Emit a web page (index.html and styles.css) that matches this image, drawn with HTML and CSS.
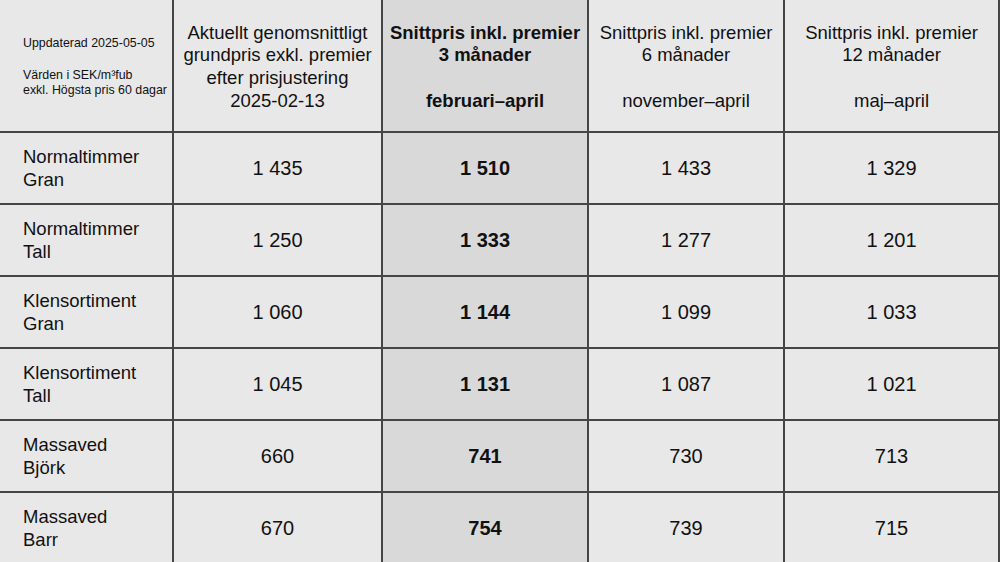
FILE: index.html
```html
<!DOCTYPE html>
<html lang="sv">
<head>
<meta charset="utf-8">
<title>Snittpriser</title>
<link rel="stylesheet" href="styles.css">
</head>
<body>
<div class="grid">
  <div class="cell head note">
    <div>Uppdaterad 2025-05-05</div>
    <div class="gap"></div>
    <div>Värden i SEK/m³fub</div>
    <div>exkl. Högsta pris 60 dagar</div>
  </div>
  <div class="cell head">Aktuellt genomsnittligt<br>grundpris exkl. premier<br>efter prisjustering<br>2025-02-13</div>
  <div class="cell head hl bold">Snittpris inkl. premier<br>3 månader<br><br>februari–april</div>
  <div class="cell head">Snittpris inkl. premier<br>6 månader<br><br>november–april</div>
  <div class="cell head">Snittpris inkl. premier<br>12 månader<br><br>maj–april</div>

  <div class="cell label">Normaltimmer<br>Gran</div>
  <div class="cell num">1 435</div>
  <div class="cell num hl bold">1 510</div>
  <div class="cell num">1 433</div>
  <div class="cell num">1 329</div>

  <div class="cell label">Normaltimmer<br>Tall</div>
  <div class="cell num">1 250</div>
  <div class="cell num hl bold">1 333</div>
  <div class="cell num">1 277</div>
  <div class="cell num">1 201</div>

  <div class="cell label">Klensortiment<br>Gran</div>
  <div class="cell num">1 060</div>
  <div class="cell num hl bold">1 144</div>
  <div class="cell num">1 099</div>
  <div class="cell num">1 033</div>

  <div class="cell label">Klensortiment<br>Tall</div>
  <div class="cell num">1 045</div>
  <div class="cell num hl bold">1 131</div>
  <div class="cell num">1 087</div>
  <div class="cell num">1 021</div>

  <div class="cell label">Massaved<br>Björk</div>
  <div class="cell num">660</div>
  <div class="cell num hl bold">741</div>
  <div class="cell num">730</div>
  <div class="cell num">713</div>

  <div class="cell label">Massaved<br>Barr</div>
  <div class="cell num">670</div>
  <div class="cell num hl bold">754</div>
  <div class="cell num">739</div>
  <div class="cell num">715</div>
</div>
</body>
</html>
```
FILE: styles.css
```css
html, body {
  margin: 0;
  padding: 0;
  background: #e8e8e8;
}
body {
  width: 1000px;
  height: 562px;
  overflow: hidden;
  font-family: "Liberation Sans", Arial, sans-serif;
  color: #111;
}
.grid {
  display: grid;
  grid-template-columns: 174px 209px 206px 196px 215px;
  grid-template-rows: 133px repeat(6, 72px);
  width: 1000px;
}
.cell {
  box-sizing: border-box;
  border-right: 2px solid #454545;
  border-bottom: 2px solid #454545;
  display: flex;
  align-items: center;
  justify-content: center;
  text-align: center;
  background: #e8e8e8;
}
.head {
  font-size: 18.5px;
  line-height: 22.7px;
  padding-top: 3px;
}
.note {
  flex-direction: column;
  align-items: flex-start;
  justify-content: center;
  text-align: left;
  font-size: 12.4px;
  line-height: 15px;
  padding-left: 23px;
  padding-top: 2px;
}
.note .gap {
  height: 17px;
}
.label {
  justify-content: flex-start;
  text-align: left;
  padding-left: 23px;
  font-size: 18.5px;
  line-height: 23px;
}
.num {
  font-size: 20px;
}
.hl {
  background: #d9d9d9;
}
.bold {
  font-weight: bold;
}
```
